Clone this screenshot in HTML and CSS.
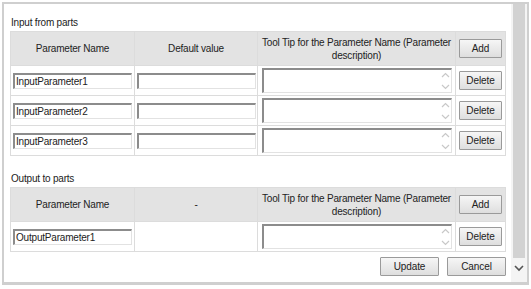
FILE: index.html
```html
<!DOCTYPE html>
<html lang="en">
<head>
  <meta charset="UTF-8">
  <title>Parameters</title>
  <link rel="stylesheet" href="styles.css">
</head>
<body>
  <div class="frame">
    <div class="content">
      <div class="caption">Input from parts</div>
      <table class="params">
        <colgroup>
          <col class="c-name"><col class="c-def"><col class="c-tip"><col class="c-btn">
        </colgroup>
        <thead>
          <tr>
            <th>Parameter Name</th>
            <th>Default value</th>
            <th class="tip-head">Tool Tip for the Parameter Name (Parameter description)</th>
            <th><button class="btn small">Add</button></th>
          </tr>
        </thead>
        <tbody>
          <tr>
            <td><input type="text" value="InputParameter1"></td>
            <td><input type="text"></td>
            <td><div class="tip-box"><textarea></textarea><span class="spin"><svg width="9" height="20" viewBox="0 0 9 20"><path d="M1 6 L4.5 2.5 L8 6 M1 14 L4.5 17.5 L8 14" fill="none" stroke="#c8c8c8" stroke-width="1.2"/></svg></span></div></td>
            <td><button class="btn small">Delete</button></td>
          </tr>
          <tr>
            <td><input type="text" value="InputParameter2"></td>
            <td><input type="text"></td>
            <td><div class="tip-box"><textarea></textarea><span class="spin"><svg width="9" height="20" viewBox="0 0 9 20"><path d="M1 6 L4.5 2.5 L8 6 M1 14 L4.5 17.5 L8 14" fill="none" stroke="#c8c8c8" stroke-width="1.2"/></svg></span></div></td>
            <td><button class="btn small">Delete</button></td>
          </tr>
          <tr>
            <td><input type="text" value="InputParameter3"></td>
            <td><input type="text"></td>
            <td><div class="tip-box"><textarea></textarea><span class="spin"><svg width="9" height="20" viewBox="0 0 9 20"><path d="M1 6 L4.5 2.5 L8 6 M1 14 L4.5 17.5 L8 14" fill="none" stroke="#c8c8c8" stroke-width="1.2"/></svg></span></div></td>
            <td><button class="btn small">Delete</button></td>
          </tr>
        </tbody>
      </table>

      <div class="caption second">Output to parts</div>
      <table class="params">
        <colgroup>
          <col class="c-name"><col class="c-def"><col class="c-tip"><col class="c-btn">
        </colgroup>
        <thead>
          <tr>
            <th>Parameter Name</th>
            <th>-</th>
            <th class="tip-head">Tool Tip for the Parameter Name (Parameter description)</th>
            <th><button class="btn small">Add</button></th>
          </tr>
        </thead>
        <tbody>
          <tr>
            <td><input type="text" value="OutputParameter1"></td>
            <td></td>
            <td><div class="tip-box"><textarea></textarea><span class="spin"><svg width="9" height="20" viewBox="0 0 9 20"><path d="M1 6 L4.5 2.5 L8 6 M1 14 L4.5 17.5 L8 14" fill="none" stroke="#c8c8c8" stroke-width="1.2"/></svg></span></div></td>
            <td><button class="btn small">Delete</button></td>
          </tr>
        </tbody>
      </table>

      <div class="actions">
        <button class="btn wide">Update</button>
        <button class="btn wide">Cancel</button>
      </div>
    </div>
    <div class="scrollbar">
      <div class="track"></div>
      <svg class="arrow" width="10" height="8" viewBox="0 0 10 8"><path d="M1 2 L5 6 L9 2" fill="none" stroke="#555" stroke-width="1.6"/></svg>
    </div>
  </div>
</body>
</html>
```

FILE: styles.css
```css
body {
  margin: 0;
  font-family: "Liberation Sans", Arial, sans-serif;
  font-size: 10px;
  letter-spacing: -0.2px;
  color: #222;
  background: #fff;
}
.frame {
  margin: 2px 2px 0 2px;
  height: 278px;
  border: 2px solid #cfcfcf;
  border-bottom-width: 3px;
  display: flex;
  background: #fff;
}
.content {
  flex: 1;
  padding: 13px 0 0 6px;
}
.caption {
  height: 14px;
  line-height: 12px;
  padding-left: 1px;
}
.caption.second {
  margin-top: 17px;
}
.params {
  width: 495px;
  border-collapse: collapse;
  table-layout: fixed;
}
.c-name { width: 124px; }
.c-def { width: 123px; }
.c-tip { width: 198px; }
.c-btn { width: 50px; }
.params th,
.params td {
  border: 1px solid #dcdcdc;
  padding: 0;
}
.params th {
  height: 33px;
  background: #e3e3e3;
  font-weight: normal;
  text-align: center;
  line-height: 13px;
  padding: 0 4px;
}
.params th.tip-head {
  padding: 0 1px;
}
.params th:last-child {
  padding: 0;
}
.params td {
  height: 29px;
  text-align: center;
}
.params td:first-child,
.params td:nth-child(2) {
  padding: 0 2px;
}
input[type="text"] {
  box-sizing: border-box;
  width: 119px;
  height: 16px;
  margin: 0;
  padding: 0 1px;
  font-family: inherit;
  font-size: 10px;
  letter-spacing: -0.2px;
  color: #222;
  border-style: solid;
  border-width: 2px 1px 1px 2px;
  border-color: #8c8c8c #e2e2e2 #e2e2e2 #8c8c8c;
  display: block;
}
.tip-box {
  box-sizing: border-box;
  width: 190px;
  height: 25px;
  margin: 0 0 0 4px;
  border-style: solid;
  border-width: 2px 1px 1px 2px;
  border-color: #8c8c8c #e2e2e2 #e2e2e2 #8c8c8c;
  display: flex;
  background: #fff;
}
.tip-box textarea {
  flex: 1;
  border: none;
  resize: none;
  margin: 0;
  padding: 0;
  outline: none;
}
.spin {
  width: 12px;
  display: flex;
  align-items: center;
  justify-content: center;
}
.btn {
  font-family: inherit;
  font-size: 10px;
  letter-spacing: -0.1px;
  color: #222;
  background: linear-gradient(#f6f6f6, #dedede);
  border: 1px solid #9a9a9a;
  border-radius: 1px;
  padding: 0;
  margin: 0;
}
.btn.small {
  width: 43px;
  height: 19px;
}
.actions {
  display: flex;
  justify-content: flex-end;
  gap: 8px;
  margin-top: 5px;
  width: 496px;
}
.btn.wide {
  width: 59px;
  height: 19px;
}
.scrollbar {
  width: 16px;
  display: flex;
  flex-direction: column;
  align-items: center;
  background: #f4f4f4;
}
.track {
  width: 12px;
  flex: 1;
  margin-bottom: 6px;
  background: #d2d2d2;
}
.arrow {
  margin-bottom: 10px;
}
```
